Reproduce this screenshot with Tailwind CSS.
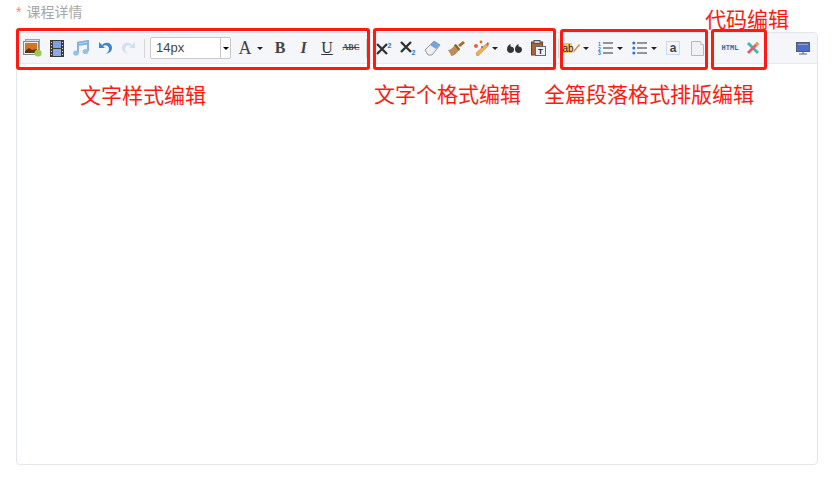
<!DOCTYPE html>
<html lang="en">
<head>
  <meta charset="UTF-8" />
  <meta name="viewport" content="width=device-width, initial-scale=1.0" />
  <title>课程详情</title>
  <script src="https://cdn.jsdelivr.net/npm/@tailwindcss/browser@4"></script>
</head>
<body class="relative w-[835px] h-[482px] overflow-hidden bg-white font-['Liberation_Sans','Noto_Sans_CJK_SC',sans-serif]">

  <div class="pl-[16px] pr-[17px]">
    <div class="h-[32px] pt-[3px] text-[14px] leading-[18px] text-[#a8a8a8]"><span class="text-[#f08a80] mr-[5px]">*</span>课程详情</div>

    <!-- editor -->
    <div class="h-[433px] border border-[#e4e6ef] rounded-[4px]">
      <div class="h-[31px] flex items-center pl-[4px] bg-[#f5f6f9] border-b border-[#e8e9ef] rounded-t-[4px] *:shrink-0">
        <!-- image -->
        <span class="w-[24px] flex justify-center pr-[2px]"><svg width="19" height="18" viewBox="0 0 19 18"><rect x="2.500" y="0.500" width="14" height="11" fill="#d8d8d8" stroke="#a0a0a0"/><rect x="0.500" y="2.500" width="15" height="13" fill="#eee" stroke="#8a8a8a"/><rect x="2" y="4" width="12" height="10" fill="#d8741c"/><path d="M2 12l4-3 3 2 5-1v4H2z" fill="#5a3412"/><circle cx="15" cy="14" r="3.500" fill="#9acb3c"/></svg></span>
        <!-- video -->
        <span class="w-[24px] flex justify-center"><svg width="14" height="17" viewBox="0 0 14 17"><rect width="14" height="17" fill="#3a3a3a"/><rect x="3" y="1" width="8" height="7" fill="#7f9fe0"/><rect x="3" y="9" width="8" height="7" fill="#8fa9e4"/><path d="M1 2h1v1H1zM1 5h1v1H1zM1 8h1v1H1zM1 11h1v1H1zM1 14h1v1H1zM12 2h1v1h-1zM12 5h1v1h-1zM12 8h1v1h-1zM12 11h1v1h-1zM12 14h1v1h-1z" fill="#ddd"/></svg></span>
        <!-- music -->
        <span class="w-[24px] flex justify-center"><svg width="16" height="16" viewBox="0 0 16 16"><path d="M5 13V2.500L15 1v10" fill="none" stroke="#84b2e0" stroke-width="2"/><path d="M5 5L15 3.500" stroke="#84b2e0" stroke-width="2"/><ellipse cx="3" cy="13" rx="2.800" ry="2.600" fill="#94bfe8"/><ellipse cx="12.500" cy="11.500" rx="2.800" ry="2.600" fill="#94bfe8"/></svg></span>
        <!-- undo -->
        <span class="w-[24px] flex justify-center"><svg width="14" height="14" viewBox="0 0 14 14"><path d="M1 1v6h6L5 5c3-2 6 0 6 3 0 2-1 3-3 5 4-1 6-3 6-6 0-5-6-7-10-3z" fill="#3a87d0"/></svg></span>
        <!-- redo -->
        <span class="w-[24px] flex justify-center"><svg width="14" height="14" viewBox="0 0 14 14"><path d="M13 1v6H7l2-2C6 3 3 5 3 8c0 2 1 3 3 5-4-1-6-3-6-6 0-5 6-7 10-3z" fill="#cfe0f0"/></svg></span>
        <span class="w-px h-[19px] bg-[#d5d5d5] ml-[3px] mr-[5px]"></span>
        <!-- font size -->
        <div class="w-[81px] h-[22px] flex bg-white border border-[#c8c8c8] rounded-[2px] text-[13px] leading-[20px] text-[#444]">
          <span class="flex-1 pl-[5px] border-r border-[#c8c8c8]">14px</span>
          <span class="w-[9px] flex items-center justify-center"><span class="border-x-[3px] border-t-[3px] border-x-transparent border-t-black"></span></span>
        </div>
        <span class="w-[24px] ml-[2px] text-center font-['Liberation_Serif',serif] text-[18px] leading-[20px] text-[#444]">A</span>
        <span class="w-[6px] border-x-[3px] border-t-[3px] border-x-transparent border-t-[#222] mr-[5px]"></span>
        <span class="w-[24px] text-center font-['Liberation_Serif',serif] font-bold text-[16px] text-[#444]">B</span>
        <span class="w-[23px] text-center font-['Liberation_Serif',serif] italic font-bold text-[16px] text-[#444]">I</span>
        <span class="w-[24px] text-center font-['Liberation_Serif',serif] underline text-[16px] text-[#333]">U</span>
        <span class="w-[24px] text-center font-['Liberation_Serif',serif] line-through text-[8px] font-bold text-[#444]">ABC</span>
        <span class="w-px h-[19px] bg-[#d5d5d5] ml-[3px] mr-[5px]"></span>
        <!-- superscript -->
        <span class="w-[24px] flex justify-center"><svg width="16" height="13" viewBox="0 0 16 13"><path d="M1 2l10 10M11 2L1 12" stroke="#333" stroke-width="2.400"/><text x="11.500" y="5.500" font-size="7" font-weight="700" fill="#2f6fd8">2</text></svg></span>
        <!-- subscript -->
        <span class="w-[24px] flex justify-center"><svg width="16" height="14" viewBox="0 0 16 14"><path d="M1 1l10 10M11 1L1 11" stroke="#333" stroke-width="2.400"/><text x="11.500" y="14" font-size="7" font-weight="700" fill="#2f6fd8">2</text></svg></span>
        <!-- eraser -->
        <span class="w-[24px] flex justify-center"><svg width="17" height="16" viewBox="0 0 17 16"><path d="M1 10l9-9 6 4-8 10H4z" fill="#eee" stroke="#999"/><path d="M6 5l4-4 6 4-4 4z" fill="#6ea6e4"/></svg></span>
        <!-- brush -->
        <span class="w-[24px] flex justify-center"><svg width="17" height="15" viewBox="0 0 17 15"><path d="M0 9c3 0 5-3 7-5l4 5c-2 3-5 6-8 6 0-2-2-4-3-6z" fill="#bd8e54"/><path d="M6 4l2-1 4 5-1 2z" fill="#7d5f34"/><path d="M10 4l5-4 2 2-5 4z" fill="#a66a2a"/></svg></span>
        <!-- wand -->
        <span class="w-[24px] ml-[1px] flex justify-center"><svg width="17" height="16" viewBox="0 0 17 16"><path d="M4 16l-1-3L13 4l2 2L5 16z" fill="#f0b050" stroke="#b07a30" stroke-width=".5"/><path d="M13 4l2-2 1 2-1 2z" fill="#d85a5a"/><circle cx="3" cy="6" r="2" fill="#e8642c"/><circle cx="8" cy="2" r="1.400" fill="#e8642c"/><circle cx="9" cy="7" r="1" fill="#4a7ad0"/></svg></span>
        <span class="w-[6px] border-x-[3px] border-t-[3px] border-x-transparent border-t-[#222] ml-[-1px] mr-[4px]"></span>
        <!-- quote -->
        <span class="w-[24px] flex justify-center"><svg width="15" height="9" viewBox="0 0 15 9"><path d="M3.500 0C1 1 0 3 0 5.500 0 7.500 1.500 9 3.500 9S7 7.500 7 5.500 5.500 2.500 3.500 2.500zM11.500 0C9 1 8 3 8 5.500 8 7.500 9.500 9 11.500 9S15 7.500 15 5.500 13.500 2.500 11.500 2.500z" fill="#333"/></svg></span>
        <!-- paste -->
        <span class="w-[24px] flex justify-center"><svg width="15" height="16" viewBox="0 0 15 16"><rect x="0.500" y="2" width="11" height="13" fill="#a8643a" stroke="#6b4022"/><rect x="3" y="0.500" width="6" height="3" fill="#ccc" stroke="#555"/><rect x="4.500" y="6.500" width="10" height="9" fill="#eef2f7" stroke="#5a6a80"/><text x="9.500" y="14" font-size="8" font-weight="700" text-anchor="middle" fill="#222">T</text></svg></span>
        <span class="w-px h-[19px] bg-[#d5d5d5] ml-[8px] mr-[2px]"></span>
        <!-- highlight -->
        <span class="w-[20px] flex justify-center"><svg width="18" height="14" viewBox="0 0 18 14"><rect y="2" width="10" height="10" fill="#f5c56a"/><text x="0.500" y="10.500" font-size="10" fill="#222">ab</text><path d="M11 12l1-3 5-6 1 1-5 6z" fill="#c98a30"/></svg></span>
        <span class="w-[6px] border-x-[3px] border-t-[3px] border-x-transparent border-t-[#222] ml-[2px] mr-[8px]"></span>
        <!-- ordered list -->
        <span class="w-[16px] flex justify-center"><svg width="15" height="14" viewBox="0 0 15 14"><path d="M5 2h10M5 7h10M5 12h10" stroke="#333" stroke-width="1"/><text x="0" y="4.500" font-size="5" font-weight="700" fill="#2f6fd8">1</text><text x="0" y="9.500" font-size="5" font-weight="700" fill="#2f6fd8">2</text><text x="0" y="14" font-size="5" font-weight="700" fill="#2f6fd8">3</text></svg></span>
        <span class="w-[6px] border-x-[3px] border-t-[3px] border-x-transparent border-t-[#222] ml-[4px] mr-[8px]"></span>
        <!-- bullet list -->
        <span class="w-[16px] flex justify-center"><svg width="15" height="14" viewBox="0 0 15 14"><path d="M5 2h10M5 7h10M5 12h10" stroke="#333" stroke-width="1"/><circle cx="1.800" cy="2" r="1.500" fill="#2f6fd8"/><circle cx="1.800" cy="7" r="1.500" fill="#2f6fd8"/><circle cx="1.800" cy="12" r="1.500" fill="#2f6fd8"/></svg></span>
        <span class="w-[6px] border-x-[3px] border-t-[3px] border-x-transparent border-t-[#222] ml-[4px] mr-[4px]"></span>
        <!-- select all -->
        <span class="w-[24px] flex justify-center"><svg width="14" height="14" viewBox="0 0 14 14"><rect x="0.500" y="0.500" width="13" height="13" fill="#f3f7fd" stroke="#9dbdf0" stroke-dasharray="1 1"/><text x="7" y="11" font-size="12" font-weight="700" text-anchor="middle" fill="#444">a</text></svg></span>
        <!-- page -->
        <span class="w-[24px] flex justify-center"><svg width="13" height="15" viewBox="0 0 13 15"><path d="M.5.500h9l3 3v11H.500z" fill="#f0f1f4" stroke="#b8b8b8"/><path d="M9.500.500v3h3" fill="#fff" stroke="#c8c8c8"/></svg></span>
        <span class="w-[22px] ml-[10px] text-center font-['DejaVu_Sans_Mono','Liberation_Mono',monospace] font-bold text-[7px] text-[#34689c]">HTML</span>
        <!-- clean -->
        <span class="w-[24px] flex justify-center"><svg width="14" height="14" viewBox="0 0 14 14"><path d="M1 3l2-2 10 10-2 2z" fill="#3bb8b0"/><path d="M13 3l-2-2L1 11l2 2z" fill="#e85a6a"/><path d="M9 3l2-2 2 2-2 2z" fill="#f0a040"/></svg></span>
        <!-- preview -->
        <span class="w-[26px] ml-[25px] flex justify-center"><svg width="14" height="13" viewBox="0 0 14 13"><rect x="0.500" y="0.500" width="13" height="9" fill="#4a70c8" stroke="#555e70"/><path d="M2 2h10v1H2z" fill="#8aa4e0"/><path d="M3 12h8M7 10v2" stroke="#555e70"/></svg></span>
      </div>
    </div>
  </div>

  <!-- red annotation frames -->
  <div class="absolute left-[16px] top-[28px] w-[354px] h-[42px] border-[3px] border-[#fe1a0e] rounded-[3px]"></div>
  <div class="absolute left-[373px] top-[28px] w-[183px] h-[42px] border-[3px] border-[#fe1a0e] rounded-[3px]"></div>
  <div class="absolute left-[560px] top-[29px] w-[148px] h-[41px] border-[3px] border-[#fe1a0e] rounded-[3px]"></div>
  <div class="absolute left-[711px] top-[29px] w-[56px] h-[41px] border-[3px] border-[#fe1a0e] rounded-[3px]"></div>

  <!-- annotation labels -->
  <div class="absolute left-[80px] top-[82px] text-[21px] leading-[28px] text-[#fe1a0e]">文字样式编辑</div>
  <div class="absolute left-[374px] top-[81px] text-[21px] leading-[28px] text-[#fe1a0e]">文字个格式编辑</div>
  <div class="absolute left-[544px] top-[81px] text-[21px] leading-[28px] text-[#fe1a0e]">全篇段落格式排版编辑</div>
  <div class="absolute left-[705px] top-[6px] text-[21px] leading-[28px] text-[#fe1a0e]">代码编辑</div>

</body>
</html>
